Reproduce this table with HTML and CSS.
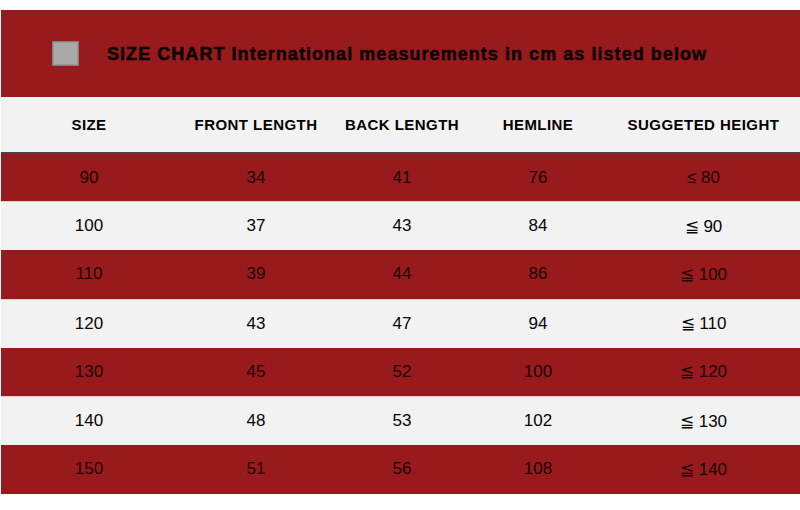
FILE: index.html
```html
<!DOCTYPE html>
<html>
<head>
<meta charset="utf-8">
<link rel="stylesheet" href="styles.css">
</head>
<body>
<div class="chart">
  <div class="banner">
    <span class="box"></span>
    <h1 class="title">SIZE CHART International measurements in cm as listed below</h1>
  </div>
  <table class="sizes">
    <colgroup>
      <col class="c1"><col class="c2"><col class="c3"><col class="c4"><col class="c5">
    </colgroup>
    <thead>
      <tr class="head"><th>SIZE</th><th>FRONT LENGTH</th><th>BACK LENGTH</th><th>HEMLINE</th><th>SUGGETED HEIGHT</th></tr>
    </thead>
    <tbody>
      <tr class="red"><td>90</td><td>34</td><td>41</td><td>76</td><td>≤ 80</td></tr>
      <tr class="light"><td>100</td><td>37</td><td>43</td><td>84</td><td>≦ 90</td></tr>
      <tr class="red"><td>110</td><td>39</td><td>44</td><td>86</td><td>≦ 100</td></tr>
      <tr class="light"><td>120</td><td>43</td><td>47</td><td>94</td><td>≦ 110</td></tr>
      <tr class="red"><td>130</td><td>45</td><td>52</td><td>100</td><td>≦ 120</td></tr>
      <tr class="light"><td>140</td><td>48</td><td>53</td><td>102</td><td>≦ 130</td></tr>
      <tr class="red"><td>150</td><td>51</td><td>56</td><td>108</td><td>≦ 140</td></tr>
    </tbody>
  </table>
</div>
</body>
</html>
```
FILE: styles.css
```css
html, body {
  margin: 0;
  padding: 0;
  background: #ffffff;
}
body {
  font-family: "Liberation Sans", Arial, sans-serif;
  width: 800px;
  height: 510px;
  overflow: hidden;
}
.chart {
  padding: 10px 0 0 1px;
}
.banner {
  background: #981a1c;
  height: 87px;
  display: flex;
  align-items: center;
  padding-left: 51px;
  box-sizing: border-box;
}
.box {
  width: 25px;
  height: 23px;
  background: #a9a9a9;
  border: 1px solid #7e7e7e;
  box-shadow: inset 0 0 0 1px #999;
  flex: none;
}
.title {
  margin: 2px 0 0 28px;
  font-size: 18px;
  font-weight: bold;
  color: #0a0202;
  letter-spacing: 1.05px;
  white-space: nowrap;
  -webkit-text-stroke: 0.5px #0a0202;
}
.sizes {
  width: 799px;
  border-collapse: collapse;
  table-layout: fixed;
}
.c1 { width: 176px; }
.c2 { width: 158px; }
.c3 { width: 134px; }
.c4 { width: 138px; }
.c5 { width: 193px; }
.head {
  background: #f2f2f2;
  height: 56px;
  border-bottom: 2px solid #444;
}
.head th {
  font-size: 15px;
  font-weight: bold;
  color: #000;
  text-align: center;
  padding: 0;
  letter-spacing: 0.45px;
}
.sizes td {
  height: 48.7px;
  padding: 0;
  text-align: center;
  font-size: 17px;
  box-sizing: border-box;
}
.red {
  background: #981a1c;
}
.red td {
  color: #1a0202;
}
.light {
  background: #f2f2f2;
}
.light td {
  color: #050505;
  border-top: 1px solid #f3c6c6;
}
```
